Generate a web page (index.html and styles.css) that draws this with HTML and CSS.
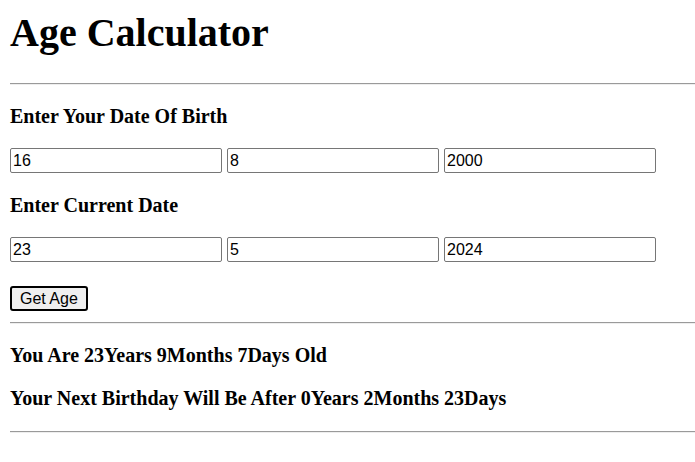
FILE: index.html
```html
<!DOCTYPE html>
<html>
<head>
<meta charset="utf-8">
<link rel="stylesheet" href="styles.css">
</head>
<body>
<div class="page">
  <h1 class="title">Age Calculator</h1>
  <hr class="rule">
  <h3 class="label">Enter Your Date Of Birth</h3>
  <div class="row">
    <input class="field" type="text" value="16">
    <input class="field" type="text" value="8">
    <input class="field" type="text" value="2000">
  </div>
  <h3 class="label">Enter Current Date</h3>
  <div class="row">
    <input class="field" type="text" value="23">
    <input class="field" type="text" value="5">
    <input class="field" type="text" value="2024">
  </div>
  <div class="actions">
    <button class="btn" type="button">Get Age</button>
  </div>
  <hr class="rule">
  <h3 class="label">You Are 23Years 9Months 7Days Old</h3>
  <h3 class="label">Your Next Birthday Will Be After 0Years 2Months 23Days</h3>
  <hr class="rule">
</div>
</body>
</html>
```
FILE: styles.css
```css
html, body {
  margin: 0;
  padding: 0;
  background: #fff;
}
.page {
  padding: 0 0 0 10px;
  font-family: "Liberation Serif", "Times New Roman", serif;
  color: #000;
  overflow: hidden;
}
.title {
  font-size: 40px;
  font-weight: bold;
  margin: 10px 0 0;
  line-height: 46px;
}
.rule {
  margin: 27px 0 0;
  border: none;
  border-top: 1px solid #9a9a9a;
  border-bottom: 1px solid #eeeeee;
  height: 0;
}
.label {
  font-size: 20px;
  font-weight: bold;
  margin: 0;
  line-height: 23px;
}
.rule + .label { margin-top: 20px; }
.row {
  display: flex;
  gap: 5px;
}
.label + .row { margin-top: 20px; }
.row + .label { margin-top: 21px; }
.field {
  width: 212px;
  height: 25px;
  box-sizing: border-box;
  border: 1px solid #767676;
  border-radius: 2px;
  padding: 1px 2px;
  font-family: "Liberation Sans", Arial, sans-serif;
  font-size: 16px;
  color: #000;
  background: #fff;
  margin: 0;
}
.actions {
  margin-top: 24px;
}
.btn {
  height: 25px;
  box-sizing: border-box;
  padding: 1px 8px;
  font-family: "Liberation Sans", Arial, sans-serif;
  font-size: 16px;
  color: #000;
  background: #efefef;
  border: 2px solid #000;
  border-radius: 3px;
  margin: 0;
}
.actions + .rule { margin-top: 11px; }
.label + .label { margin-top: 20px; }
.label + .rule { margin-top: 21px; }
```
